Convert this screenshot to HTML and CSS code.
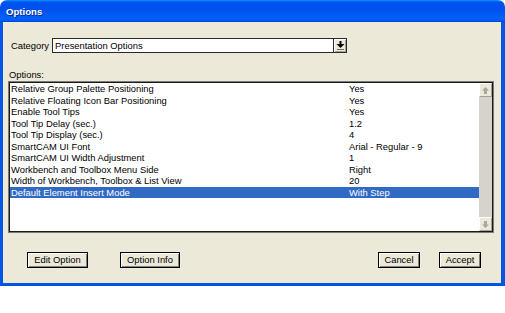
FILE: index.html
```html
<!DOCTYPE html>
<html>
<head>
<meta charset="utf-8">
<title>Options</title>
<link rel="stylesheet" href="styles.css">
</head>
<body>
<div class="window">
  <div class="titlebar"><span class="title">Options</span></div>
  <div class="frame">
    <div class="category-row">
      <span class="cat-label">Category</span>
      <div class="combo">
        <div class="combo-text">Presentation Options</div>
        <div class="combo-btn">
          <svg width="9" height="10" viewBox="0 0 9 10"><rect x="3.5" y="0" width="2" height="3" fill="#000"/><path d="M0.5 3h8L4.5 7z" fill="#000"/><rect x="1" y="8" width="7" height="1" fill="#6b6b6b"/></svg>
        </div>
      </div>
    </div>
    <div class="options-label">Options:</div>
    <div class="list">
      <div class="list-inner">
        <div class="rows">
          <div class="row"><span class="name">Relative Group Palette Positioning</span><span class="value">Yes</span></div>
          <div class="row"><span class="name">Relative Floating Icon Bar Positioning</span><span class="value">Yes</span></div>
          <div class="row"><span class="name">Enable Tool Tips</span><span class="value">Yes</span></div>
          <div class="row"><span class="name">Tool Tip Delay (sec.)</span><span class="value">1.2</span></div>
          <div class="row"><span class="name">Tool Tip Display (sec.)</span><span class="value">4</span></div>
          <div class="row"><span class="name">SmartCAM UI Font</span><span class="value">Arial - Regular - 9</span></div>
          <div class="row"><span class="name">SmartCAM UI Width Adjustment</span><span class="value">1</span></div>
          <div class="row"><span class="name">Workbench and Toolbox Menu Side</span><span class="value">Right</span></div>
          <div class="row"><span class="name">Width of Workbench, Toolbox &amp; List View</span><span class="value">20</span></div>
          <div class="row sel"><span class="name">Default Element Insert Mode</span><span class="value">With Step</span></div>
        </div>
        <div class="scrollbar">
          <div class="sb-btn"><svg width="7" height="7" viewBox="0 0 7 7"><path d="M3.5 0L7 3.5H5V7H2V3.5H0z" fill="#a9a79f"/></svg></div>
          <div class="sb-track"></div>
          <div class="sb-btn"><svg width="7" height="7" viewBox="0 0 7 7"><path d="M3.5 7L7 3.5H5V0H2V3.5H0z" fill="#a9a79f"/></svg></div>
        </div>
      </div>
    </div>
    <div class="buttons">
      <button class="btn btn-edit">Edit Option</button>
      <button class="btn btn-info">Option Info</button>
      <button class="btn btn-cancel">Cancel</button>
      <button class="btn btn-accept">Accept</button>
    </div>
  </div>
</div>
</body>
</html>
```

FILE: styles.css
```css
* { box-sizing: border-box; }

body {
  margin: 0;
  background: #fff;
  font-family: "Liberation Sans", Arial, sans-serif;
  font-size: 9.4px;
  color: #000;
}

.window {
  width: 505px;
  height: 286px;
  display: flex;
  flex-direction: column;
}

.titlebar {
  height: 22px;
  flex: none;
  border-radius: 7px 7px 0 0;
  background: linear-gradient(to bottom, #0997ff 0%, #0053ee 10%, #0050ee 40%, #0062f6 85%, #0058f0 94%, #003dd7 100%);
  display: flex;
  align-items: center;
  padding-left: 6px;
}

.title {
  color: #fff;
  font-weight: bold;
  font-size: 9.6px;
  text-shadow: 1px 1px 0 #0a2a8c;
}

.frame {
  flex: 1;
  background: #ece9d8;
  border-style: solid;
  border-color: #0055e5;
  border-width: 0 4px 3px 3px;
  display: flex;
  flex-direction: column;
}

.category-row {
  display: flex;
  align-items: center;
  gap: 3px;
  height: 15px;
  margin: 16px 0 0 8px;
}

.combo {
  display: flex;
  width: 295px;
  height: 15px;
}

.combo-text {
  flex: 1;
  background: #fff;
  border: 1px solid #2a2a2a;
  border-right: none;
  padding-left: 2px;
  line-height: 13px;
  white-space: nowrap;
}

.combo-btn {
  width: 14px;
  border: 1px solid #2a2a2a;
  background: #ece9d8;
  box-shadow: inset 1px 1px #fff, inset -1px -1px #a0a0a0;
  display: flex;
  align-items: center;
  justify-content: center;
}

.options-label {
  margin: 16px 0 0 6px;
  height: 12px;
  line-height: 12px;
}

.list {
  margin-left: 5px;
  width: 486px;
  height: 152px;
  border: 1px solid #7a7a7a;
}

.list-inner {
  height: 100%;
  border: 1px solid #1a1a1a;
  background: #fff;
  display: flex;
}

.rows {
  flex: 1;
}

.row {
  display: flex;
  height: 11.5px;
  line-height: 11.5px;
  padding-left: 1px;
  white-space: nowrap;
}

.name {
  width: 338px;
  flex: none;
}

.row.sel {
  background: #316ac5;
  color: #fff;
}

.scrollbar {
  width: 13px;
  display: flex;
  flex-direction: column;
  background: #d6d3cc;
}

.sb-btn {
  height: 14px;
  flex: none;
  background: #ece9d8;
  border: 1px solid;
  border-color: #fff #a0a0a0 #a0a0a0 #fff;
  display: flex;
  align-items: center;
  justify-content: center;
}

.sb-track {
  flex: 1;
}

.buttons {
  display: flex;
  height: 16px;
  margin-top: 19px;
  padding: 0 20px 0 24px;
}

.btn {
  height: 16px;
  padding: 0;
  margin: 0;
  border: 1px solid #000;
  background: #ece9d8;
  box-shadow: inset 1px 1px #fff, inset -1px -1px #808080;
  font-family: inherit;
  font-size: 9.4px;
  color: #000;
  line-height: 14px;
  text-align: center;
}

.btn-edit { width: 61px; }
.btn-info { width: 60px; margin-left: 32px; }
.btn-cancel { width: 42px; margin-left: auto; }
.btn-accept { width: 42px; margin-left: 19px; }
```
